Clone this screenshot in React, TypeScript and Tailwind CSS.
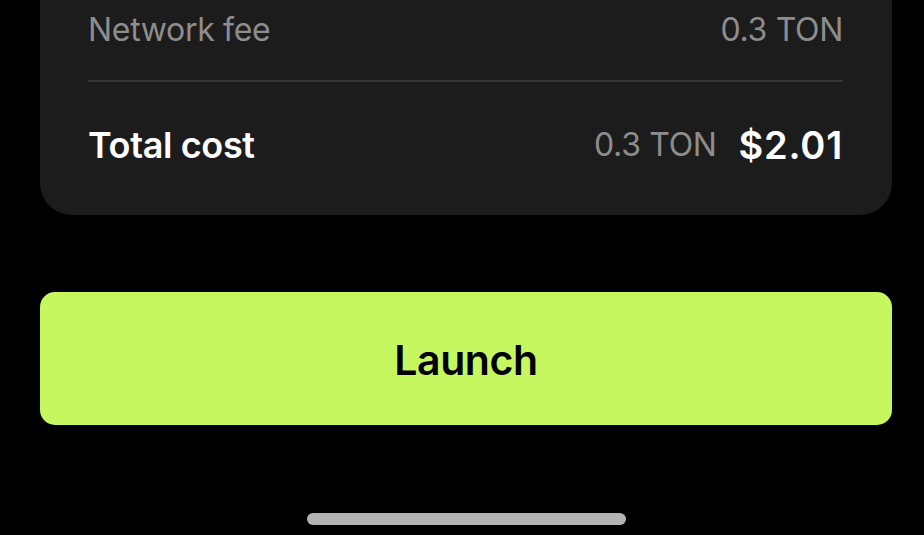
export default function App() {
  return (
    <div
      className="w-[924px] h-[535px] bg-black overflow-hidden flex flex-col pl-[40px] pr-[32px]"
      style={{ fontFamily: "Inter, 'Noto Sans', sans-serif" }}
    >
      {/* Summary card, top scrolled out of view */}
      <div className="bg-[#1c1c1c] rounded-b-[32px] pl-[48px] pr-[49px] pt-[10px] pb-[48px] flex flex-col">
        <div className="flex items-center justify-between h-[40px] text-[32px] text-[#8d8d8d] tracking-[-0.01em]">
          <span>Network fee</span>
          <span>0.3 TON</span>
        </div>
        <div className="h-[2px] bg-[#363636] mt-[30px]" />
        <div className="flex items-center justify-between h-[44px] mt-[41px]">
          <span className="text-[36px] font-semibold text-white tracking-[-0.01em]">Total cost</span>
          <div className="flex items-center gap-[22px]">
            <span className="text-[32px] text-[#8d8d8d] tracking-[-0.01em]">0.3 TON</span>
            <span className="text-[38px] font-semibold text-white tracking-[0.02em]">$2.01</span>
          </div>
        </div>
      </div>

      <button className="mt-[77px] h-[133px] w-full rounded-[15px] bg-[#c7f75f] text-black text-[41px] font-semibold tracking-[-0.01em] pt-[4px]">
        Launch
      </button>

      <div className="mt-[88px] flex justify-center">
        <div className="w-[319px] h-[12px] rounded-full bg-[#b3b3b3]" />
      </div>
    </div>
  )
}
